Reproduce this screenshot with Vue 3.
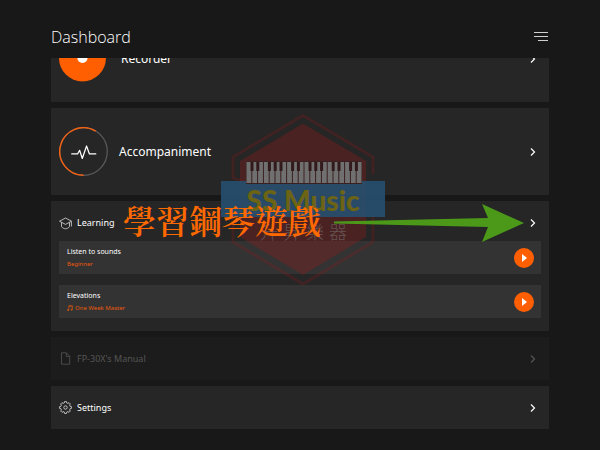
<template>
  <div class="app">
    <header class="header">
      <h1 class="title">Dashboard</h1>
      <button class="menu-button" type="button" aria-label="Menu">
        <svg width="14" height="10" viewBox="0 0 14 10">
          <path d="M0 .5h14M0 4.5h14M4 8.5h10" stroke="#d0d0d0" stroke-width="1.2" />
        </svg>
      </button>
    </header>

    <main class="list">
      <button class="card feature recorder" type="button">
        <svg class="feature-icon" width="48" height="48" viewBox="0 0 48 48">
          <circle cx="23" cy="23.5" r="23" fill="#ff5f00" />
          <circle cx="23" cy="23.5" r="5" fill="#fff" />
        </svg>
        <span class="feature-label">Recorder</span>
        <svg class="chevron" viewBox="0 0 6 8"><path d="M1 .5 4.5 4 1 7.5" /></svg>
      </button>

      <button class="card feature" type="button">
        <svg class="feature-icon" width="48" height="48" viewBox="0 0 48 48">
          <circle cx="24" cy="24" r="23.3" fill="none" stroke="#5b5b5b" stroke-width="1.2" />
          <path d="M24 47.3A23.3 23.3 0 1 1 36 4" fill="none" stroke="#f26011" stroke-width="1.4" />
          <path
            d="M12 26.4h6.2l2-3.6 2.6 8 4.2-12.2 2.8 7.8H36.5"
            fill="none"
            stroke="#fff"
            stroke-width="1.2"
            stroke-linejoin="round"
          />
        </svg>
        <span class="feature-label">Accompaniment</span>
        <svg class="chevron" viewBox="0 0 6 8"><path d="M1 .5 4.5 4 1 7.5" /></svg>
      </button>

      <section class="card learning">
        <button class="row" type="button">
          <svg class="row-icon" viewBox="0 0 13 13">
            <path d="M6.5 1 12.5 4.2 6.5 7.4.5 4.2ZM2.5 5.4v4.2c2 2.8 6 2.8 8 0V5.4M12.4 4.4v5" />
          </svg>
          <span class="row-label">Learning</span>
          <svg class="chevron" viewBox="0 0 6 8"><path d="M1 .5 4.5 4 1 7.5" /></svg>
        </button>
        <div v-for="lesson in lessons" :key="lesson.title" class="lesson">
          <div class="lesson-text">
            <div class="lesson-title">{{ lesson.title }}</div>
            <div class="lesson-sub">
              <svg v-if="lesson.song" class="note" width="6" height="6" viewBox="0 0 6 6">
                <path d="M1.8 4.8V.6h3.6v3.8M1.8 1.7h3.6" fill="none" stroke="#e8590c" stroke-width=".6" />
                <circle cx="1.1" cy="5" r=".9" fill="#e8590c" />
                <circle cx="4.7" cy="4.6" r=".9" fill="#e8590c" />
              </svg>
              {{ lesson.subtitle }}
            </div>
          </div>
          <button class="play" type="button" :aria-label="'Play ' + lesson.title">
            <svg width="20" height="20" viewBox="0 0 20 20">
              <path d="M8 6v8l5-4z" fill="#fff" />
            </svg>
          </button>
        </div>
      </section>

      <button class="card row manual" type="button" disabled>
        <svg class="row-icon" viewBox="0 0 13 13">
          <path d="M2.5.8h5l3.2 3.4v8H2.5zM7.3.8v3.6h3.4" />
        </svg>
        <span class="row-label">FP-30X's Manual</span>
        <svg class="chevron" viewBox="0 0 6 8"><path d="M1 .5 4.5 4 1 7.5" /></svg>
      </button>

      <button class="card row" type="button">
        <svg class="row-icon" viewBox="0 0 13 13">
          <path :d="gearPath" />
          <circle cx="6.5" cy="6.5" r="1.7" />
        </svg>
        <span class="row-label">Settings</span>
        <svg class="chevron" viewBox="0 0 6 8"><path d="M1 .5 4.5 4 1 7.5" /></svg>
      </button>
    </main>

    <svg class="watermark" width="170" height="175" viewBox="218 112 170 175">
      <path
        d="M242 181 233 178V157L303 115.5 373 157V174M233 216V242L303 284 373 242V216"
        fill="none"
        stroke="#a01818"
        stroke-opacity=".22"
        stroke-width="3"
      />
      <path d="M303 123.5 366 161V237L303 275 240 237V161Z" fill="#a01c1c" fill-opacity=".3" />
      <path d="M221 181H385V217H221Z" fill="#265070" fill-opacity=".9" />
      <path d="M246 161H362V184H246Z" fill="#3a2020" />
      <rect v-for="n in 20" :key="'w' + n" :x="240.7 + n * 5.8" y="162" width="4.8" height="21" fill="#707070" />
      <rect v-for="n in blackKeys" :key="'b' + n" :x="244.7 + n * 5.8" y="162" width="3" height="9" fill="#321a1c" />
      <text class="brand" x="303" y="211" text-anchor="middle">SS Music</text>
      <text class="brand-cn" x="260 283 306 329" y="239">升昇樂器</text>
    </svg>

    <div class="caption">學習鋼琴遊戲</div>
    <svg class="arrow" width="192" height="38" viewBox="0 0 192 38">
      <path d="M2 17.5 156 14 150 0 192 19 150 38 156 23 2 19.5Z" fill="#4c991a" />
    </svg>
  </div>
</template>

<script setup>
const lessons = [
  { title: 'Listen to sounds', subtitle: 'Beginner', song: false },
  { title: 'Elevations', subtitle: 'One Week Master', song: true },
]

const blackKeys = [1, 2, 4, 5, 6, 8, 9, 11, 12, 13, 15, 16, 18, 19]

// outline of an eight-tooth cog around the centre of a 13x13 icon
const gearPath = (() => {
  const points = []
  for (let i = 0; i < 8; i++) {
    const teeth = [[-15, 4.7], [-9, 6], [9, 6], [15, 4.7]]
    teeth.forEach(([offset, r]) => {
      const a = ((i * 45 + offset) * Math.PI) / 180
      points.push(`${(6.5 + r * Math.cos(a)).toFixed(2)} ${(6.5 + r * Math.sin(a)).toFixed(2)}`)
    })
  }
  return `M${points.join('L')}Z`
})()
</script>

<style>
body {
  background: #181818;
}
</style>

<style scoped>
.app {
  position: relative;
  box-sizing: border-box;
  min-height: 100vh;
  padding: 0 51px 21px;
  overflow: hidden;
  background: #181818;
  color: #fff;
  font-family: "Noto Sans", "Open Sans", sans-serif;
}

button {
  margin: 0;
  padding: 0;
  border: none;
  background: none;
  color: inherit;
  font: inherit;
  text-align: left;
  cursor: pointer;
}

.header {
  display: flex;
  align-items: center;
  justify-content: space-between;
  height: 58px;
  padding-top: 16px;
  box-sizing: border-box;
}

.title {
  margin: 0;
  font-family: "Open Sans", sans-serif;
  font-size: 16px;
  line-height: 42px;
  font-weight: 300;
}

.menu-button {
  display: flex;
  padding-right: 1px;
}

.list {
  display: flex;
  flex-direction: column;
  gap: 6px;
  overflow: hidden;
}

.card {
  box-sizing: border-box;
  background: #262626;
}

.feature {
  display: flex;
  align-items: center;
  height: 87px;
  padding: 0 13px 0 8px;
}

/* scrolled partly under the header */
.recorder {
  margin-top: -43px;
}

.feature-icon {
  flex: none;
  width: 49px;
  height: 49px;
}

.feature-label {
  flex: 1;
  padding-left: 11px;
  font-size: 12px;
  line-height: 18px;
}

.recorder .feature-label {
  padding-left: 13px;
}

.chevron {
  flex: none;
  width: 6px;
  height: 8px;
  fill: none;
  stroke: #fff;
  stroke-width: 1.2;
}

.row {
  display: flex;
  align-items: center;
  width: 100%;
  height: 43px;
  padding: 0 13px 0 8px;
}

.row-icon {
  flex: none;
  width: 13px;
  height: 13px;
  fill: none;
  stroke: #ddd;
  stroke-width: 0.8;
}

.row-label {
  flex: 1;
  padding-left: 5px;
  font-size: 9px;
  line-height: 14px;
}

.manual {
  background: #1c1c1c;
  color: #555;
}

.manual .row-icon,
.manual .chevron {
  stroke: #555;
}

.learning {
  padding-bottom: 13px;
}

.learning .row {
  height: 40px;
  padding-top: 4px;
}

.lesson {
  display: flex;
  align-items: center;
  justify-content: space-between;
  height: 33px;
  margin: 0 8px;
  padding: 0 7px 0 8px;
  box-sizing: border-box;
  background: #333;
}

.lesson + .lesson {
  margin-top: 11px;
}

.lesson-title {
  font-size: 7px;
  line-height: 12px;
}

.lesson-sub {
  display: flex;
  align-items: center;
  gap: 2px;
  color: #e8590c;
  font-size: 6px;
  line-height: 12px;
}

.play {
  display: flex;
  border-radius: 50%;
  background: #ff5f00;
}

.watermark {
  position: absolute;
  top: 112px;
  left: calc(50% - 82px);
  pointer-events: none;
}

.brand {
  fill: #6c6414;
  font-family: Lato, sans-serif;
  font-size: 28px;
  font-weight: 900;
}

.brand-cn {
  fill: #777;
  fill-opacity: 0.6;
  font-family: "Noto Sans CJK TC", sans-serif;
  font-size: 18px;
  font-weight: 300;
}

.caption {
  position: absolute;
  top: 197px;
  left: 123px;
  color: #ff6900;
  font-family: "Noto Serif CJK TC", "Noto Sans CJK TC", serif;
  font-size: 33px;
  font-weight: 600;
  line-height: 46px;
  pointer-events: none;
}

.arrow {
  position: absolute;
  top: 204px;
  right: 76px;
  pointer-events: none;
}
</style>
